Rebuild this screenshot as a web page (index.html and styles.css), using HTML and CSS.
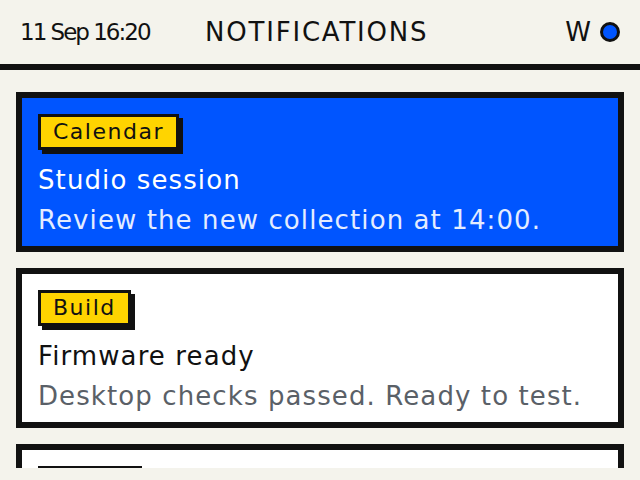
FILE: index.html
```html
<!DOCTYPE HTML>
<html lang="en">

<head>
    <meta charset="utf-8">
    <title>Notifications</title>

    <link rel="stylesheet" href="styles.css">
</head>

<body>
    <div class="topbar">
        <div class="clock">11 Sep 16:20</div>
        <div class="page-title">NOTIFICATIONS</div>
        <div class="status">
            <span class="wifi">W</span>
            <span class="dot"></span>
        </div>
    </div>

    <div class="list">
        <div class="card card-active">
            <div class="tag">Calendar</div>
            <div class="card-title">Studio session</div>
            <div class="card-text">Review the new collection at 14:00.</div>
        </div>

        <div class="card">
            <div class="tag">Build</div>
            <div class="card-title">Firmware ready</div>
            <div class="card-text">Desktop checks passed. Ready to test.</div>
        </div>

        <!-- only the top of the next card shows -->
        <div class="card card-peek">
            <div class="tag">Power</div>
        </div>
    </div>
</body>

</html>
```

FILE: styles.css
```css
*{
    box-sizing: border-box;
    padding: 0;
    margin: 0;
}

html, body{
    height: 100%;
}

body{
    background: #f4f3ec;
    color: #111111;
    font-family: "DejaVu Sans", sans-serif;
    display: flex;
    flex-direction: column;
    overflow: hidden;
}

.topbar{
    height: 70px;
    flex: none;
    display: flex;
    align-items: center;
    padding: 0 20px;
    border-bottom: 6px solid #111111;
}

.clock{
    font-size: 23px;
    letter-spacing: -2px;
    width: 185px;
}

.page-title{
    font-size: 26px;
    letter-spacing: 1.8px;
}

.status{
    margin-left: auto;
    display: flex;
    align-items: center;
    gap: 9px;
    font-size: 26px;
}

.dot{
    width: 20px;
    height: 20px;
    border-radius: 50%;
    border: 3px solid #111111;
    background-color: #0055ff;
}

.list{
    flex: 1;
    overflow: hidden;
    padding: 22px 16px 0;
    margin-bottom: 12px;
    display: flex;
    flex-direction: column;
    gap: 16px;
}

.card{
    flex: none;
    height: 160px;
    background-color: #ffffff;
    border: 6px solid #111111;
    padding: 16px 16px 8px;
}

.tag{
    display: inline-block;
    background-color: #ffd400;
    border: 3px solid #111111;
    box-shadow: 4px 4px 0 #111111;
    padding: 0 12px;
    font-size: 22px;
    letter-spacing: 1.5px;
    line-height: 30px;
    color: #111111;
    margin-bottom: 12px;
}

.card-peek .tag{
    margin-top: 0;
}

.card-title,
.card-text{
    font-size: 26px;
    letter-spacing: 1.1px;
    line-height: 36px;
    white-space: nowrap;
}

.card-title{
    margin-bottom: 4px;
}

.card-text{
    color: #5a6067;
}

.card-active{
    background-color: #0055ff;
}

.card-active .card-title{
    color: #ffffff;
}

.card-active .card-text{
    color: #e4ecff;
}
```
